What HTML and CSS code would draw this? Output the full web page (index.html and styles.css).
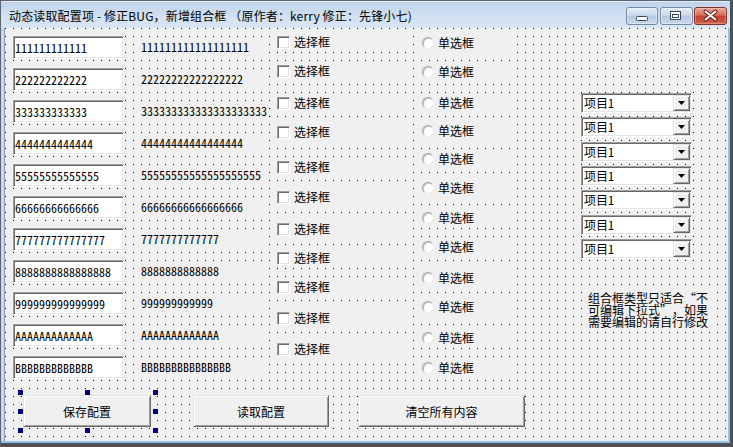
FILE: index.html
```html
<!DOCTYPE html>
<html lang="zh-CN">
<head>
<meta charset="utf-8">
<title>动态读取配置项</title>
<link rel="stylesheet" href="styles.css">
</head>
<body>
<div class="window">
  <div class="titlebar">
    <div class="title">动态读取配置项 - 修正BUG，新增组合框 （原作者：kerry 修正：先锋小七)</div>
    <div class="caption-btns">
      <div class="cbtn cbtn-min">
        <svg width="32" height="18" viewBox="0 0 32 18"><rect x="10.5" y="9.5" width="11" height="4" rx="1" fill="#fff" stroke="#37465a"/></svg>
      </div>
      <div class="cbtn cbtn-max">
        <svg width="32" height="18" viewBox="0 0 32 18"><rect x="10.5" y="4.5" width="10" height="8" fill="#fff" stroke="#37465a"/><rect x="12.5" y="7.5" width="6" height="3" fill="#fff" stroke="#37465a"/></svg>
      </div>
      <div class="cbtn cbtn-close">
        <svg width="33" height="18" viewBox="0 0 33 18"><path d="M11.5 4.5 L21.5 12.5 M21.5 4.5 L11.5 12.5" stroke="#5a1f18" stroke-width="4" stroke-linecap="round"/><path d="M11.5 4.5 L21.5 12.5 M21.5 4.5 L11.5 12.5" stroke="#fff" stroke-width="2" stroke-linecap="round"/></svg>
      </div>
    </div>
  </div>
  <div class="frame">
    <div class="canvas">
      <div class="controls">
        <div class="col col-text">
          <div class="textbox">111111111111</div>
          <div class="textbox">222222222222</div>
          <div class="textbox">333333333333</div>
          <div class="textbox">4444444444444</div>
          <div class="textbox">55555555555555</div>
          <div class="textbox">66666666666666</div>
          <div class="textbox">777777777777777</div>
          <div class="textbox">8888888888888888</div>
          <div class="textbox">999999999999999</div>
          <div class="textbox">AAAAAAAAAAAAA</div>
          <div class="textbox">BBBBBBBBBBBBB</div>
        </div>
        <div class="col col-label">
          <div class="label">111111111111111111</div>
          <div class="label">22222222222222222</div>
          <div class="label">333333333333333333333</div>
          <div class="label">44444444444444444</div>
          <div class="label">55555555555555555555</div>
          <div class="label">66666666666666666</div>
          <div class="label">7777777777777</div>
          <div class="label">8888888888888</div>
          <div class="label">999999999999</div>
          <div class="label">AAAAAAAAAAAAA</div>
          <div class="label">BBBBBBBBBBBBBBB</div>
        </div>
        <div class="col col-check">
          <div class="check"><span class="box"></span><span class="ctext">选择框</span></div>
          <div class="check"><span class="box"></span><span class="ctext">选择框</span></div>
          <div class="check"><span class="box"></span><span class="ctext">选择框</span></div>
          <div class="check"><span class="box"></span><span class="ctext">选择框</span></div>
          <div class="check"><span class="box"></span><span class="ctext">选择框</span></div>
          <div class="check"><span class="box"></span><span class="ctext">选择框</span></div>
          <div class="check"><span class="box"></span><span class="ctext">选择框</span></div>
          <div class="check"><span class="box"></span><span class="ctext">选择框</span></div>
          <div class="check"><span class="box"></span><span class="ctext">选择框</span></div>
          <div class="check"><span class="box"></span><span class="ctext">选择框</span></div>
          <div class="check"><span class="box"></span><span class="ctext">选择框</span></div>
        </div>
        <div class="col col-radio">
          <div class="radio"><span class="dot"></span><span class="rtext">单选框</span></div>
          <div class="radio"><span class="dot"></span><span class="rtext">单选框</span></div>
          <div class="radio"><span class="dot"></span><span class="rtext">单选框</span></div>
          <div class="radio"><span class="dot"></span><span class="rtext">单选框</span></div>
          <div class="radio"><span class="dot"></span><span class="rtext">单选框</span></div>
          <div class="radio"><span class="dot"></span><span class="rtext">单选框</span></div>
          <div class="radio"><span class="dot"></span><span class="rtext">单选框</span></div>
          <div class="radio"><span class="dot"></span><span class="rtext">单选框</span></div>
          <div class="radio"><span class="dot"></span><span class="rtext">单选框</span></div>
          <div class="radio"><span class="dot"></span><span class="rtext">单选框</span></div>
          <div class="radio"><span class="dot"></span><span class="rtext">单选框</span></div>
          <div class="radio"><span class="dot"></span><span class="rtext">单选框</span></div>
        </div>
        <div class="col col-combo">
          <div class="combo"><span class="combo-text">项目1</span><span class="drop"><svg width="7" height="4" viewBox="0 0 7 4"><polygon points="0,0 7,0 3.5,4" fill="#000"/></svg></span></div>
          <div class="combo"><span class="combo-text">项目1</span><span class="drop"><svg width="7" height="4" viewBox="0 0 7 4"><polygon points="0,0 7,0 3.5,4" fill="#000"/></svg></span></div>
          <div class="combo"><span class="combo-text">项目1</span><span class="drop"><svg width="7" height="4" viewBox="0 0 7 4"><polygon points="0,0 7,0 3.5,4" fill="#000"/></svg></span></div>
          <div class="combo"><span class="combo-text">项目1</span><span class="drop"><svg width="7" height="4" viewBox="0 0 7 4"><polygon points="0,0 7,0 3.5,4" fill="#000"/></svg></span></div>
          <div class="combo"><span class="combo-text">项目1</span><span class="drop"><svg width="7" height="4" viewBox="0 0 7 4"><polygon points="0,0 7,0 3.5,4" fill="#000"/></svg></span></div>
          <div class="combo"><span class="combo-text">项目1</span><span class="drop"><svg width="7" height="4" viewBox="0 0 7 4"><polygon points="0,0 7,0 3.5,4" fill="#000"/></svg></span></div>
          <div class="combo"><span class="combo-text">项目1</span><span class="drop"><svg width="7" height="4" viewBox="0 0 7 4"><polygon points="0,0 7,0 3.5,4" fill="#000"/></svg></span></div>
          <div class="note">组合框类型只适合<span class="q q-open">“</span>不<br>可编辑下拉式<span class="q q-close">”</span>，如果<br>需要编辑的请自行修改</div>
        </div>
      </div>
      <div class="buttons">
        <div class="btn btn-save selected">保存配置
          <span class="handle h-tl"></span><span class="handle h-tm"></span><span class="handle h-tr"></span>
          <span class="handle h-ml"></span><span class="handle h-mr"></span>
          <span class="handle h-bl"></span><span class="handle h-bm"></span><span class="handle h-br"></span>
        </div>
        <div class="btn btn-read">读取配置</div>
        <div class="btn btn-clear">清空所有内容</div>
      </div>
    </div>
  </div>
</div>
</body>
</html>
```

FILE: styles.css
```css
* { box-sizing: border-box; margin: 0; padding: 0; }
html, body { width: 733px; height: 447px; overflow: hidden; }
body {
  font-family: "Noto Sans CJK SC", "Noto Sans", sans-serif;
  font-size: 12px;
  color: #000;
  background: #ffffff;
}

.window {
  width: 733px;
  height: 447px;
  display: flex;
  flex-direction: column;
  border-left: 1px solid #5b6470;
  border-top: 1px solid #5b6470;
  border-right: 3px solid #4d5054;
  border-bottom: 4px solid #4d5054;
  background: #c4d7ee;
}

/* ---------- title bar ---------- */
.titlebar {
  height: 27px;
  flex: none;
  display: flex;
  justify-content: space-between;
  align-items: flex-start;
  background: linear-gradient(#c0d3eb, #d2e1f3 60%, #d8e5f5);
  box-shadow: inset 0 1px 0 #e4eefa;
}
.title {
  margin-top: 6px;
  padding-left: 8px;
  line-height: 18px;
  font-size: 12px;
  letter-spacing: 0.15px;
  white-space: nowrap;
  color: #000;
}
.caption-btns {
  display: flex;
  gap: 1px;
  margin-top: 6px;
  margin-right: 3px;
}
.cbtn {
  height: 18px;
  width: 32px;
  border: 1px solid #7889a2;
  border-radius: 3px;
  background: linear-gradient(#e3ecf7, #cbdaec 45%, #b6cae3 50%, #c5d7ed);
  box-shadow: inset 0 0 0 1px rgba(255,255,255,0.45);
  position: relative;
  overflow: hidden;
}
.cbtn svg { position: absolute; left: -1px; top: -1px; }
.cbtn-max { width: 33px; margin-left: 1px; }
.cbtn-close {
  width: 33px;
  border-color: #7c3226;
  background: linear-gradient(#e8a898, #d56e5b 45%, #c43f2b 50%, #d0614a);
  box-shadow: inset 0 0 0 1px rgba(255,220,210,0.35);
}

/* ---------- frame & canvas ---------- */
.frame {
  flex: 1;
  display: flex;
  padding: 0 2px 2px 3px;
  background: #c4d7ee;
  box-shadow: inset -2px -2px 0 #8ec1ec;
}
.canvas {
  flex: 1;
  border-left: 1px solid #8fa3bb;
  background-color: #f0f0f0;
  background-image: conic-gradient(from 270deg at 1px 1px, #000 90deg, transparent 0);
  background-size: 8px 8px;
  display: flex;
  flex-direction: column;
}

.controls {
  height: 367px;
  flex: none;
  display: flex;
  align-items: flex-start;
  padding-left: 8px;
}
.col { display: flex; flex-direction: column; }

/* text boxes */
.col-text { margin-top: 8px; width: 111px; gap: 9px; }
.textbox {
  height: 23px;
  background: #fff;
  border-top: 1px solid #a0a0a0;
  border-left: 1px solid #a0a0a0;
  border-right: 1px solid #fff;
  border-bottom: 1px solid #fff;
  box-shadow: inset 1px 1px 0 #696969, inset -1px -1px 0 #e3e3e3;
  padding-left: 1px;
  line-height: 21px;
  white-space: nowrap;
  overflow: hidden;
  font-feature-settings: "hwid";
}

/* labels */
.col-label { margin-left: 17px; margin-top: 11px; width: 128px; gap: 14px; }
.label {
  height: 18px;
  line-height: 16px;
  background: #f0f0f0;
  white-space: nowrap;
  overflow: hidden;
  font-feature-settings: "hwid";
}

/* check boxes */
.col-check { margin-left: 8px; margin-top: 4px; width: 136px; }
.check {
  height: 20px;
  display: flex;
  align-items: center;
  background: #f0f0f0;
  margin-top: 10px;
}
.check:first-child { margin-top: 0; }
.check:nth-child(2) { margin-top: 9px; }
.check:nth-child(3) { margin-top: 12px; }
.check:nth-child(4) { margin-top: 9px; }
.check:nth-child(5) { margin-top: 15px; }
.check:nth-child(7) { margin-top: 12px; }
.check:nth-child(8) { margin-top: 9px; }
.check:nth-child(9) { margin-top: 9px; }
.check:nth-child(10) { margin-top: 11px; }
.check:nth-child(11) { margin-top: 11px; }
.box {
  width: 13px;
  height: 13px;
  flex: none;
  background: #fff;
  border-top: 1px solid #a0a0a0;
  border-left: 1px solid #a0a0a0;
  border-right: 1px solid #fff;
  border-bottom: 1px solid #fff;
  box-shadow: inset 1px 1px 0 #696969, inset -1px -1px 0 #e3e3e3;
}
.ctext { margin-left: 4px; line-height: 20px; }

/* radio buttons */
.col-radio { margin-left: 8px; margin-top: 5px; width: 90px; }
.radio {
  height: 20px;
  display: flex;
  align-items: center;
  padding-left: 1px;
  background: #f0f0f0;
  margin-top: 9px;
}
.radio:first-child { margin-top: 0; }
.radio:nth-child(3) { margin-top: 11px; }
.radio:nth-child(4) { margin-top: 8px; }
.radio:nth-child(5) { margin-top: 8px; }
.radio:nth-child(7) { margin-top: 10px; }
.radio:nth-child(9) { margin-top: 11px; }
.radio:nth-child(11) { margin-top: 11px; }
.radio:nth-child(12) { margin-top: 10px; }
.dot {
  width: 12px;
  height: 12px;
  flex: none;
  border-radius: 50%;
  background: #fff;
  border: 1px solid;
  border-color: #a0a0a0 #ececec #ececec #a0a0a0;
  box-shadow: inset 1px 1px 0 #c8c8c8;
}
.rtext { margin-left: 4px; line-height: 20px; }

/* combo boxes */
.col-combo { margin-left: 70px; margin-top: 65px; width: 111px; }
.combo {
  height: 20px;
  display: flex;
  background: #fff;
  border-top: 1px solid #a0a0a0;
  border-left: 1px solid #a0a0a0;
  border-right: 1px solid #fff;
  border-bottom: 1px solid #fff;
  box-shadow: inset 1px 1px 0 #696969, inset -1px -1px 0 #e3e3e3;
  padding: 1px;
  margin-top: 4.33px;
}
.combo:first-child { margin-top: 0; }
.combo-text {
  flex: 1;
  padding-left: 1px;
  line-height: 16px;
  font-feature-settings: "hwid";
}
.drop {
  width: 17px;
  height: 16px;
  display: flex;
  align-items: center;
  justify-content: center;
  background: #f0f0f0;
  border-top: 1px solid #e3e3e3;
  border-left: 1px solid #e3e3e3;
  border-right: 1px solid #696969;
  border-bottom: 1px solid #696969;
  box-shadow: inset 1px 1px 0 #fff, inset -1px -1px 0 #a0a0a0;
}

.note {
  margin-top: 31px;
  margin-left: 3px;
  width: 130px;
  padding: 2px 0 2px 4px;
  line-height: 12px;
  background: #f0f0f0;
  white-space: nowrap;
}
.q { display: inline-block; width: 12px; }
.q-open { text-align: right; }
.q-close { text-align: left; }

/* command buttons */
.buttons {
  display: flex;
  padding-left: 18px;
}
.btn {
  height: 32px;
  display: flex;
  align-items: center;
  justify-content: center;
  background: #f0f0f0;
  border-top: 1px solid #e3e3e3;
  border-left: 1px solid #e3e3e3;
  border-right: 1px solid #696969;
  border-bottom: 1px solid #696969;
  box-shadow: inset 1px 1px 0 #fff, inset -1px -1px 0 #a0a0a0;
  font-size: 12px;
}
.btn-save { width: 128px; }
.btn-read { width: 136px; margin-left: 42px; }
.btn-clear { width: 167px; margin-left: 29px; }

.selected { position: relative; }
.handle {
  position: absolute;
  width: 5px;
  height: 5px;
  background: #000080;
}
.h-tl { left: -6px; top: -6px; }
.h-tm { left: 61px; top: -6px; }
.h-tr { left: 129px; top: -6px; }
.h-ml { left: -6px; top: 13px; }
.h-mr { left: 129px; top: 13px; }
.h-bl { left: -6px; top: 32px; }
.h-bm { left: 61px; top: 32px; }
.h-br { left: 129px; top: 32px; }
```
